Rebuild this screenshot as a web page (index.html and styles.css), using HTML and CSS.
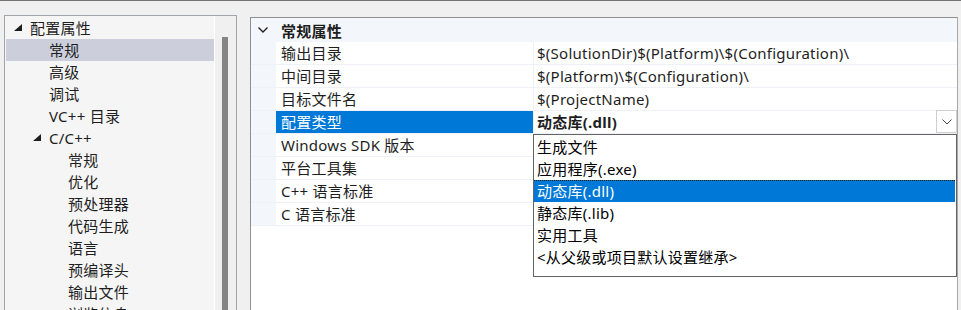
FILE: index.html
```html
<!DOCTYPE html>
<html lang="zh-CN">
<head>
<meta charset="utf-8">
<title>属性页</title>
<link rel="stylesheet" href="styles.css">
</head>
<body>
<div class="page">
  <div class="tree-panel">
    <ul class="tree">
      <li class="node l0"><span class="tw"><svg width="8" height="7" viewBox="0 0 8 7"><polygon points="8,0 8,7 0,7" fill="#1e1e1e"/></svg></span>配置属性</li>
      <li class="node l1 sel"><span class="tw"></span>常规</li>
      <li class="node l1"><span class="tw"></span>高级</li>
      <li class="node l1"><span class="tw"></span>调试</li>
      <li class="node l1"><span class="tw"></span>VC++ 目录</li>
      <li class="node l1"><span class="tw"><svg width="8" height="7" viewBox="0 0 8 7"><polygon points="8,0 8,7 0,7" fill="#1e1e1e"/></svg></span>C/C++</li>
      <li class="node l2"><span class="tw"></span>常规</li>
      <li class="node l2"><span class="tw"></span>优化</li>
      <li class="node l2"><span class="tw"></span>预处理器</li>
      <li class="node l2"><span class="tw"></span>代码生成</li>
      <li class="node l2"><span class="tw"></span>语言</li>
      <li class="node l2"><span class="tw"></span>预编译头</li>
      <li class="node l2"><span class="tw"></span>输出文件</li>
      <li class="node l2"><span class="tw"></span>浏览信息</li>
    </ul>
    <div class="divider"></div>
    <div class="scrollbar"><div class="thumb"></div></div>
  </div>

  <div class="grid-panel">
    <div class="grid">
      <div class="cat-row">
        <div class="gutter"><svg class="chev" width="10" height="6" viewBox="0 0 10 6"><polyline points="0.5,0.5 5,5 9.5,0.5" fill="none" stroke="#1e1e1e" stroke-width="1.3"/></svg></div>
        <div class="cat-name">常规属性</div>
      </div>
      <div class="row"><div class="gutter"></div><div class="name">输出目录</div><div class="value">$(SolutionDir)$(Platform)\$(Configuration)\</div></div>
      <div class="row"><div class="gutter"></div><div class="name">中间目录</div><div class="value">$(Platform)\$(Configuration)\</div></div>
      <div class="row"><div class="gutter"></div><div class="name">目标文件名</div><div class="value">$(ProjectName)</div></div>
      <div class="row active"><div class="gutter"></div><div class="name">配置类型</div><div class="value bold"><span class="vtext">动态库(.dll)</span><span class="dd-btn"><svg width="10" height="6" viewBox="0 0 10 6"><polyline points="0.5,0.5 5,5 9.5,0.5" fill="none" stroke="#444" stroke-width="1"/></svg></span></div></div>
      <div class="row"><div class="gutter"></div><div class="name">Windows SDK 版本</div><div class="value"></div></div>
      <div class="row"><div class="gutter"></div><div class="name">平台工具集</div><div class="value"></div></div>
      <div class="row"><div class="gutter"></div><div class="name">C++ 语言标准</div><div class="value"></div></div>
      <div class="row"><div class="gutter"></div><div class="name">C 语言标准</div><div class="value"></div></div>
    </div>

    <ul class="dropdown">
      <li class="opt">生成文件</li>
      <li class="opt">应用程序(.exe)</li>
      <li class="opt chosen">动态库(.dll)</li>
      <li class="opt">静态库(.lib)</li>
      <li class="opt">实用工具</li>
      <li class="opt">&lt;从父级或项目默认设置继承&gt;</li>
    </ul>
  </div>
</div>
</body>
</html>
```

FILE: styles.css
```css
* { box-sizing: border-box; }
html, body { margin: 0; padding: 0; }
body {
  width: 961px;
  height: 310px;
  overflow: hidden;
  background: #f0f0f0;
  border-top: 1px solid #747474;
  font-family: "Noto Sans", "Noto Sans CJK SC", sans-serif;
  font-size: 15px;
  letter-spacing: 0.25px;
  color: #1e1e1e;
}
ul { list-style: none; margin: 0; padding: 0; }

.page {
  display: flex;
  align-items: flex-start;
  padding: 14px 0 0 4px;
  height: 340px;
}

/* left tree panel */
.tree-panel {
  width: 233px;
  height: 330px;
  border: 1px solid #a0a4ab;
  display: flex;
  background: #f5f5f5;
}
.tree {
  width: 209px;
  padding: 1px 0 0 1px;
  background: #f5f5f5;
}
.node {
  height: 22px;
  line-height: 22px;
  display: flex;
  align-items: center;
  white-space: nowrap;
  padding-left: 8px;
}
.node.l1 { padding-left: 27px; }
.node.l2 { padding-left: 46px; }
.node.sel { background: #cccedb; }
.tw {
  width: 16px;
  height: 22px;
  flex: none;
  display: flex;
  align-items: center;
  padding-bottom: 1px;
}
.divider { width: 1px; background: #ffffff; }
.scrollbar {
  width: 21px;
  background: #f0f0f0;
  padding: 21px 0 0 7px;
}
.thumb {
  width: 6px;
  height: 300px;
  background: #858585;
}

/* right property grid */
.grid-panel {
  position: relative;
  margin: 2px 0 0 13px;
  width: 708px;
  height: 330px;
  border: 1px solid #8f8f8f;
  border-right-color: #a8a8a8;
  background: #ffffff;
}
.grid { display: flex; flex-direction: column; }
.cat-row {
  display: flex;
  height: 24px;
  background: #f3f6fb;
  align-items: center;
}
.cat-row .gutter {
  width: 25px;
  height: 24px;
  display: flex;
  align-items: center;
  padding-left: 7px;
  padding-bottom: 1px;
}
.cat-name {
  font-weight: bold;
  padding-left: 5px;
}
.row {
  display: flex;
  height: 23px;
  border-bottom: 1px solid #eef1f7;
}
.row .gutter {
  width: 25px;
  flex: none;
  background: #f3f6fb;
}
.name {
  width: 258px;
  flex: none;
  padding-left: 5px;
  line-height: 22px;
  white-space: nowrap;
  border-right: 1px solid #eef1f7;
}
.value {
  flex: 1;
  padding-left: 3px;
  line-height: 22px;
  white-space: nowrap;
  display: flex;
}
.value.bold { font-weight: bold; }
.vtext { flex: 1; }
.row.active .name {
  background: #0078d7;
  color: #ffffff;
}
.dd-btn {
  width: 21px;
  height: 23px;
  margin-top: -1px;
  border: 1px solid #cfcfcf;
  background: #ffffff;
  display: flex;
  align-items: center;
  justify-content: center;
  padding-top: 1px;
}

/* dropdown list */
.dropdown {
  position: absolute;
  left: 282px;
  top: 116px;
  width: 424px;
  height: 143px;
  border: 1px solid #646464;
  background: #ffffff;
  padding: 1px 1px 0 0;
}
.opt {
  height: 22px;
  line-height: 22px;
  padding-left: 3px;
  white-space: nowrap;
  color: #000000;
}
.opt.chosen {
  background: #0078d7;
  color: #ffffff;
  border-top: 1px dotted #2a1a00;
  line-height: 21px;
}
```
